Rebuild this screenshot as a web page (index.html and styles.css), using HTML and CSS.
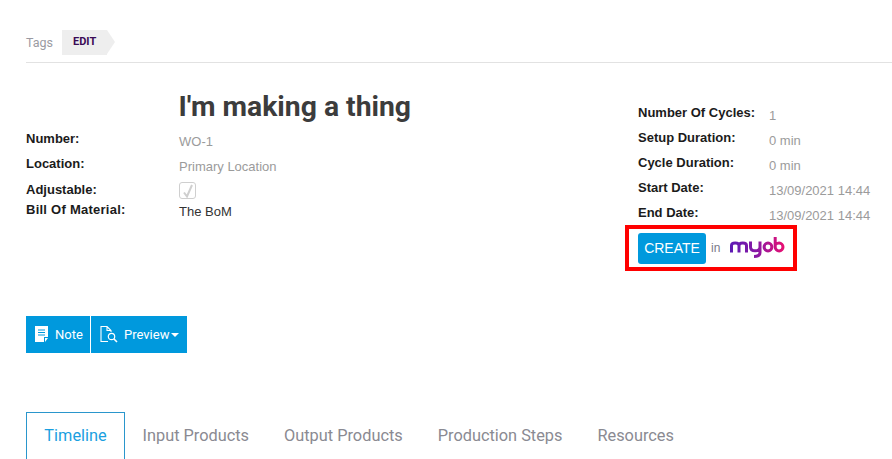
FILE: index.html
```html
<!DOCTYPE html>
<html lang="en">
<head>
<meta charset="utf-8">
<title>Work order</title>
<link rel="stylesheet" href="styles.css">
</head>
<body>
<div class="page">
  <div class="tagbar">
    <span class="tags-label">Tags</span>
    <span class="tag">EDIT</span>
  </div>
  <div class="details">
    <div class="left">
      <h1 class="title">I'm making a thing</h1>
      <div class="row r-number"><span class="label">Number:</span><span class="value">WO-1</span></div>
      <div class="row r-location"><span class="label">Location:</span><span class="value">Primary Location</span></div>
      <div class="row r-adjust"><span class="label">Adjustable:</span>
        <span class="check"><svg width="12" height="14" viewBox="0 0 12 14"><path d="M2 8.5 L5 12.5 L10 1" fill="none" stroke="#cfcfcf" stroke-width="2"/></svg></span></div>
      <div class="row r-bom"><span class="label wide">Bill Of Material:</span><span class="value dark">The BoM</span></div>
    </div>
    <div class="right">
      <div class="rrow"><span class="label">Number Of Cycles:</span><span class="value">1</span></div>
      <div class="rrow"><span class="label">Setup Duration:</span><span class="value">0 min</span></div>
      <div class="rrow"><span class="label">Cycle Duration:</span><span class="value">0 min</span></div>
      <div class="rrow"><span class="label">Start Date:</span><span class="value">13/09/2021 14:44</span></div>
      <div class="rrow"><span class="label">End Date:</span><span class="value">13/09/2021 14:44</span></div>
      <div class="create-box">
        <button class="create">CREATE</button>
        <span class="in">in</span>
        <svg class="myob" width="55" height="22" viewBox="0 0 55 22">
          <defs><linearGradient id="mg" gradientUnits="userSpaceOnUse" x1="0" x2="55" y1="0" y2="0"><stop offset="0" stop-color="#5c1ab4"/><stop offset="0.5" stop-color="#8a18a4"/><stop offset="1" stop-color="#ec1070"/></linearGradient></defs>
          <path fill="none" stroke="url(#mg)" stroke-width="3" d="M1.5 16.5 V9.5 Q1.5 7 5.2 7 Q9 7 9 9.5 V16.5 M9 9.5 Q9 7 12.8 7 Q16.5 7 16.5 9.5 V16.5 M20.5 5.5 V11 Q20.5 14.8 25.2 14.8 Q30 14.8 30 11 V5.5 M30 11 V16.5 Q30 20.4 24 20.4"/>
          <circle cx="38" cy="11" r="3.9" fill="none" stroke="url(#mg)" stroke-width="3"/>
          <path fill="none" stroke="url(#mg)" stroke-width="3" d="M45.2 1 V11 A3.9 3.9 0 1 0 49.1 7.1 Q46.5 7.1 45.2 9"/>
        </svg>
      </div>
    </div>
  </div>
  <div class="actions">
    <button class="act act-note">
      <svg width="14" height="17" viewBox="0 0 14 17"><path fill="#fff" d="M0 0 H13 V11 L9 11 V16 H0 Z M10 12 H13 L10 16 Z"/><path stroke="#0099dd" stroke-width="1" d="M3 4 H10 M3 6.5 H10 M3 9 H10"/></svg>
      <span>Note</span>
    </button>
    <button class="act act-preview">
      <svg width="18" height="17" viewBox="0 0 18 17"><path fill="none" stroke="#fff" stroke-width="1.1" d="M8 15.5 H1 V.5 H7 L11 4.5 V6 M7 .5 V4.5 H11"/><circle cx="11.5" cy="10.5" r="3.2" fill="none" stroke="#fff" stroke-width="1.2"/><path stroke="#fff" stroke-width="1.6" d="M14 13 L17 16"/></svg>
      <span>Preview</span><i class="caret"></i>
    </button>
  </div>
  <div class="tabs">
    <a class="tab active">Timeline</a>
    <a class="tab">Input Products</a>
    <a class="tab">Output Products</a>
    <a class="tab">Production Steps</a>
    <a class="tab">Resources</a>
  </div>
</div>
</body>
</html>
```
FILE: styles.css
```css
* { box-sizing: border-box; }
html, body { margin: 0; padding: 0; background: #fff; overflow: hidden; }
body { height: 459px; font-family: "Liberation Sans", Arial, sans-serif; }
.page { padding: 30px 0 0 26px; }

.tagbar { display: flex; align-items: flex-start; height: 33px; border-bottom: 1px solid #e2e2e2; }
.tags-label { font: 12.5px/25px Roboto, sans-serif; color: #9a9aa2; width: 36px; }
.tag { position: relative; height: 25px; width: 45px; background: #eee; font: bold 11px/24px Roboto, sans-serif; color: #3a0a55; padding-left: 11px; }
.tag::after { content: ""; position: absolute; left: 45px; top: 0; border-left: 8px solid #eee; border-top: 12.5px solid transparent; border-bottom: 12.5px solid transparent; }

.details { display: flex; height: 253px; }
.left { width: 612px; padding-top: 28px; }
.title { margin: 0 0 0 152.5px; font: bold 28.3px/32px Roboto, sans-serif; color: #3c3c3c; height: 32px; }
.label { font: bold 13px/15px "Liberation Sans", Arial, sans-serif; color: #1b1b1b; }
.label.wide { letter-spacing: .25px; }
.value { font: 13px/15px "Liberation Sans", Arial, sans-serif; color: #9b9b9b; }
.value.dark { color: #333; }

.row { display: grid; grid-template-columns: 153px auto; align-items: start; }
.r-number { margin-top: 8px; height: 25px; }
.r-location { height: 25px; }
.r-adjust { height: 21px; }
.r-number .value, .r-location .value { margin-top: 3px; }
.r-adjust .label { margin-top: 1px; }
.r-bom .value { margin-top: 2px; }
.check { width: 17px; height: 17px; margin-top: 1px; border: 1px solid #cfcfcf; border-radius: 3px; display: flex; align-items: center; justify-content: center; }

.right { padding-top: 42px; }
.rrow { display: grid; grid-template-columns: 131px auto; height: 25px; }
.rrow .value { margin-top: 3px; }

.create-box { display: flex; align-items: center; width: 172px; height: 46px; margin: -5px 0 0 -13px; border: 4px solid #f00; padding-left: 9px; }
.create { width: 68px; height: 31px; border: 0; border-radius: 3px; background: #0099dd; color: #fff; font: 14px "Liberation Sans", Arial, sans-serif; padding: 0; }
.in { font: 12px "Liberation Sans", Arial, sans-serif; color: #7a7a8a; margin-left: 5px; }
.myob { margin: 0 0 2px 10px; }

.actions { display: flex; gap: 1px; height: 37px; margin-top: 0; }
.act { display: flex; align-items: center; height: 37px; border: 0; background: #0099dd; color: #fff; font: 13px Roboto, sans-serif; padding: 0; }
.act-note { width: 64px; padding-left: 9px; gap: 6px; }
.act-preview { width: 96px; padding-left: 9px; gap: 6px; }
.caret { width: 0; height: 0; margin-left: -4px; border-left: 4px solid transparent; border-right: 4px solid transparent; border-top: 4px solid #fff; }

.tabs { display: flex; margin-top: 59px; height: 47px; }
.tab { height: 47px; padding: 14px 17.5px 0; font: 16.33px/20px Roboto, sans-serif; color: #8a8a92; }
.tab.active { width: 99px; color: #1a9fe0; border: 1px solid #2a96cc; border-bottom: 0; padding: 13px 0 0; text-align: center; }
```
